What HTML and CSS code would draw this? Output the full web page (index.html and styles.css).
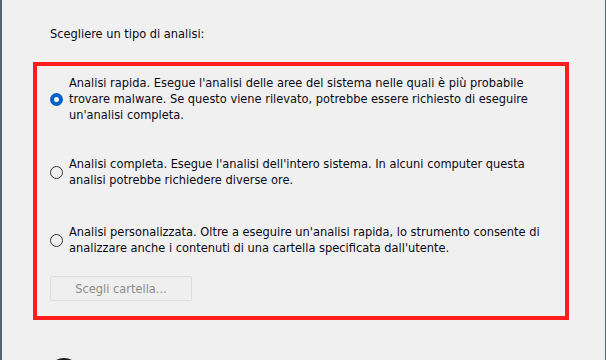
FILE: index.html
```html
<!DOCTYPE html>
<html lang="it">
<head>
    <meta charset="UTF-8">
    <title>Tipo di analisi</title>
<link rel="stylesheet" href="styles.css">
</head>
<body>
	<main class="dialog">
		<p class="prompt">Scegliere un tipo di analisi:</p>
		<section class="scan-box">
			<label class="option option-first">
				<span class="radio checked"></span>
				<span class="option-text">Analisi rapida. Esegue l'analisi delle aree del sistema nelle quali è più probabile<br>trovare malware. Se questo viene rilevato, potrebbe essere richiesto di eseguire<br>un'analisi completa.</span>
			</label>
			<label class="option option-second">
				<span class="radio"></span>
				<span class="option-text">Analisi completa. Esegue l'analisi dell'intero sistema. In alcuni computer questa<br>analisi potrebbe richiedere diverse ore.</span>
			</label>
			<label class="option option-third">
				<span class="radio"></span>
				<span class="option-text">Analisi personalizzata. Oltre a eseguire un'analisi rapida, lo strumento consente di<br>analizzare anche i contenuti di una cartella specificata dall'utente.</span>
			</label>
			<button class="folder-btn" disabled>Scegli cartella...</button>
		</section>
		<svg class="bottom-icon" width="34" height="3" viewBox="0 0 34 3"><circle cx="17" cy="17" r="16" fill="#1e1e1e"/></svg>
	</main>
</body>
</html>
```
FILE: styles.css
```css
*{padding:0;margin:0;box-sizing:border-box;}
html,body{
	width:606px;
	height:360px;
	overflow:hidden;
	background:#f0f0f0;
}
body{
	font-family:"DejaVu Sans Condensed","DejaVu Sans",sans-serif;
	font-stretch:condensed;
	font-size:12.7px;
	line-height:16px;
	color:#0a0a14;
}
.dialog{
	position:relative;
	height:360px;
	border-left:2px solid #56666e;
	border-right:1px solid #56666e;
	padding-top:26px;
}
.prompt{
	margin-left:48px;
	height:36px;
}
.scan-box{
	margin-left:31px;
	width:536px;
	height:258px;
	border:4px solid #ff1c1c;
	padding:9px 0 0 13px;
	display:flex;
	flex-direction:column;
	align-items:flex-start;
}
.option{
	display:flex;
	align-items:center;
	gap:6px;
}
.option-second{margin-top:33px;}
.option-third{margin-top:36px;}
.radio{
	flex:none;
	width:13px;
	height:13px;
	border-radius:50%;
	border:1px solid #333;
	background:#f0f0f0;
}
.radio.checked{
	border:4px solid #0063c6;
	background:#fff;
}
.folder-btn{
	margin-top:20px;
	width:142px;
	height:25px;
	font:inherit;
	color:#8c8c8c;
	background:#efefef;
	border:1px solid #dddddd;
	border-radius:2px;
}
.bottom-icon{
	position:absolute;
	left:45px;
	top:357px;
	display:block;
}
```
